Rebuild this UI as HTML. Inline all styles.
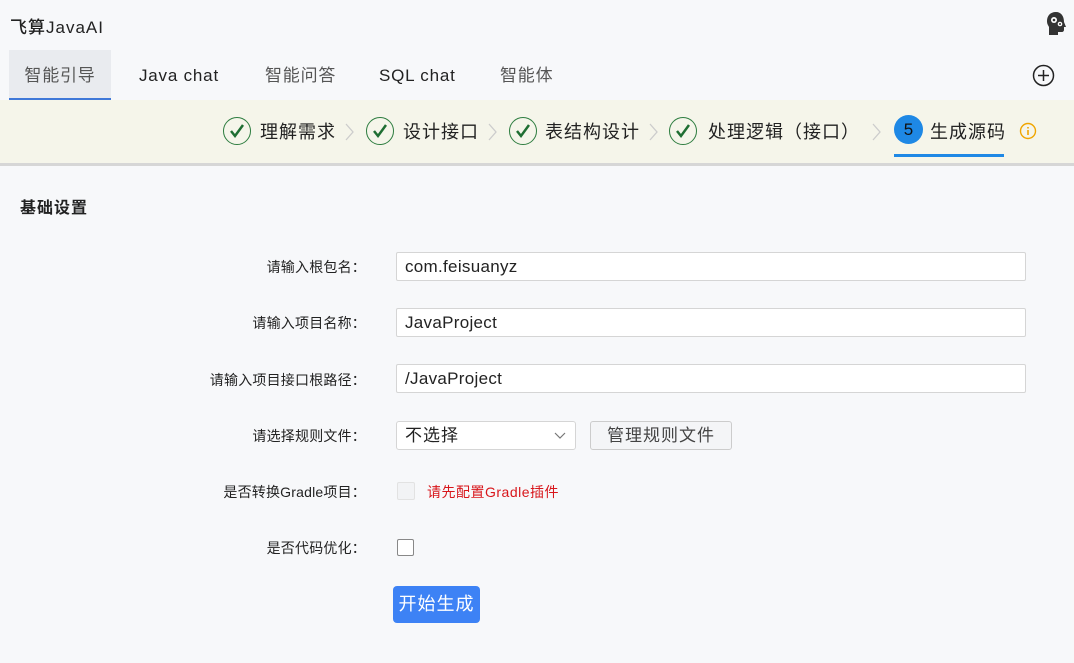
<!DOCTYPE html>
<html><head><meta charset="utf-8"><style>
body{margin:0;width:1074px;height:663px;background:#f7f8fa;font-family:"Liberation Sans","Noto Sans CJK SC",sans-serif;position:relative;overflow:hidden;color:#222}
.a{position:absolute;white-space:nowrap}
.tab{position:absolute;top:50px;height:50px;line-height:52px;font-size:17px;color:#555;letter-spacing:0.8px}
.steps{position:absolute;top:100px;left:0;width:1074px;height:63px;background:#f5f5ea;border-bottom:3px solid #d6d6d6}
.ck{position:absolute;top:117px;width:28px;height:28px;border:1.5px solid #2e7d40;border-radius:50%;box-sizing:border-box}
.ck svg{position:absolute;left:5px;top:5px}
.st{position:absolute;top:119px;font-size:18px;color:#222;letter-spacing:1px;font-family:"Noto Sans CJK SC",sans-serif;line-height:24px}
.chev{position:absolute;top:122px;width:12px;height:20px}
.lbl{position:absolute;right:708px;font-size:14px;color:#222;letter-spacing:0.2px}
.inp{position:absolute;left:396px;width:630px;height:29px;border:1px solid #d5d5d5;background:#fff;box-sizing:border-box;border-radius:2px;font-size:17px;line-height:27px;padding-left:8px;color:#222;letter-spacing:0.3px}
</style></head><body>
<div class="a" style="left:10px;top:13px;font-size:17px;font-weight:500;letter-spacing:1px">飞算JavaAI</div>
<svg class="a" style="left:1046px;top:11px" width="22" height="26" viewBox="0 0 22 26"><path d="M10 1C4 1 1 5 1 10c0 3 1 4 2 6v8h9v-3h4c1 0 2-1 2-2v-3h2l-2-5C18 5 15 1 10 1z" fill="#333"/><circle cx="8" cy="9" r="3" fill="#fff"/><circle cx="8" cy="9" r="1.3" fill="#333"/><circle cx="14" cy="13" r="2.3" fill="#fff"/><circle cx="14" cy="13" r="1" fill="#333"/></svg>
<div class="tab" style="left:9px;width:102px;background:#e9ebef;border-bottom:2px solid #3f78d8;box-sizing:border-box;text-align:center">智能引导</div>
<div class="tab" style="left:139px;color:#222">Java chat</div>
<div class="tab" style="left:265px">智能问答</div>
<div class="tab" style="left:379px;color:#222">SQL chat</div>
<div class="tab" style="left:500px">智能体</div>
<svg class="a" style="left:1032px;top:64px" width="23" height="23"><circle cx="11.5" cy="11.5" r="10" fill="none" stroke="#222" stroke-width="1.5"/><path d="M11.5 6v11M6 11.5h11" stroke="#222" stroke-width="1.5"/></svg>
<div class="steps"></div>
<div class="ck" style="left:223px"><svg width="16" height="16"><path d="M2 8l4 5 8-11" fill="none" stroke="#1f6e33" stroke-width="2.5"/></svg></div>
<div class="st" style="left:260px">理解需求</div>
<svg class="chev" style="left:344px"><path d="M2 2l7 8-7 8" fill="none" stroke="#ccc" stroke-width="1.3"/></svg>
<div class="ck" style="left:366px"><svg width="16" height="16"><path d="M2 8l4 5 8-11" fill="none" stroke="#1f6e33" stroke-width="2.5"/></svg></div>
<div class="st" style="left:403px">设计接口</div>
<svg class="chev" style="left:487px"><path d="M2 2l7 8-7 8" fill="none" stroke="#ccc" stroke-width="1.3"/></svg>
<div class="ck" style="left:509px"><svg width="16" height="16"><path d="M2 8l4 5 8-11" fill="none" stroke="#1f6e33" stroke-width="2.5"/></svg></div>
<div class="st" style="left:545px">表结构设计</div>
<svg class="chev" style="left:648px"><path d="M2 2l7 8-7 8" fill="none" stroke="#ccc" stroke-width="1.3"/></svg>
<div class="ck" style="left:669px"><svg width="16" height="16"><path d="M2 8l4 5 8-11" fill="none" stroke="#1f6e33" stroke-width="2.5"/></svg></div>
<div class="st" style="left:708px">处理逻辑（接口）</div>
<svg class="chev" style="left:871px"><path d="M2 2l7 8-7 8" fill="none" stroke="#ccc" stroke-width="1.3"/></svg>
<div class="a" style="left:894px;top:115px;width:29px;height:29px;border-radius:50%;background:#1e88e5;color:#111;font-size:17px;text-align:center;line-height:29px;font-weight:500">5</div>
<div class="st" style="left:930px">生成源码</div>
<div class="a" style="left:894px;top:154px;width:110px;height:3px;background:#1e88e5"></div>
<svg class="a" style="left:1019px;top:122px" width="18" height="18"><circle cx="9" cy="9" r="7.5" fill="none" stroke="#f0a500" stroke-width="1.4"/><path d="M9 8v5M9 5v1.5" stroke="#f0a500" stroke-width="1.6"/></svg>
<div class="a" style="left:20px;top:194px;font-size:16px;font-weight:600;letter-spacing:1px">基础设置</div>
<div class="lbl" style="top:257px">请输入根包名：</div>
<div class="inp" style="top:252px">com.feisuanyz</div>
<div class="lbl" style="top:313px">请输入项目名称：</div>
<div class="inp" style="top:308px">JavaProject</div>
<div class="lbl" style="top:370px">请输入项目接口根路径：</div>
<div class="inp" style="top:364px">/JavaProject</div>
<div class="lbl" style="top:426px">请选择规则文件：</div>
<div class="inp" style="top:421px;width:180px;border-radius:3px;letter-spacing:1px">不选择</div>
<svg class="a" style="left:554px;top:432px" width="12" height="8"><path d="M1 1l5 5 5-5" fill="none" stroke="#777" stroke-width="1.2"/></svg>
<div class="a" style="left:590px;top:421px;width:142px;height:29px;border:1px solid #ccc;border-radius:3px;background:#f4f5f7;box-sizing:border-box;text-align:center;line-height:27px;font-size:17px;color:#444;letter-spacing:1px">管理规则文件</div>
<div class="lbl" style="top:482px">是否转换Gradle项目：</div>
<div class="a" style="left:397px;top:482px;width:16px;height:16px;border:1px solid #e2e2e2;border-radius:2px;background:#f2f3f5"></div>
<div class="a" style="left:427px;top:482px;font-size:14px;color:#d8161b;letter-spacing:0.5px">请先配置Gradle插件</div>
<div class="lbl" style="top:538px">是否代码优化：</div>
<div class="a" style="left:397px;top:539px;width:15px;height:15px;border:1px solid #888;border-radius:2px;background:#fff"></div>
<div class="a" style="left:393px;top:586px;width:87px;height:37px;background:#3d82f5;border-radius:4px;color:#fff;font-size:18px;text-align:center;line-height:36px;letter-spacing:1px">开始生成</div>
</body></html>
